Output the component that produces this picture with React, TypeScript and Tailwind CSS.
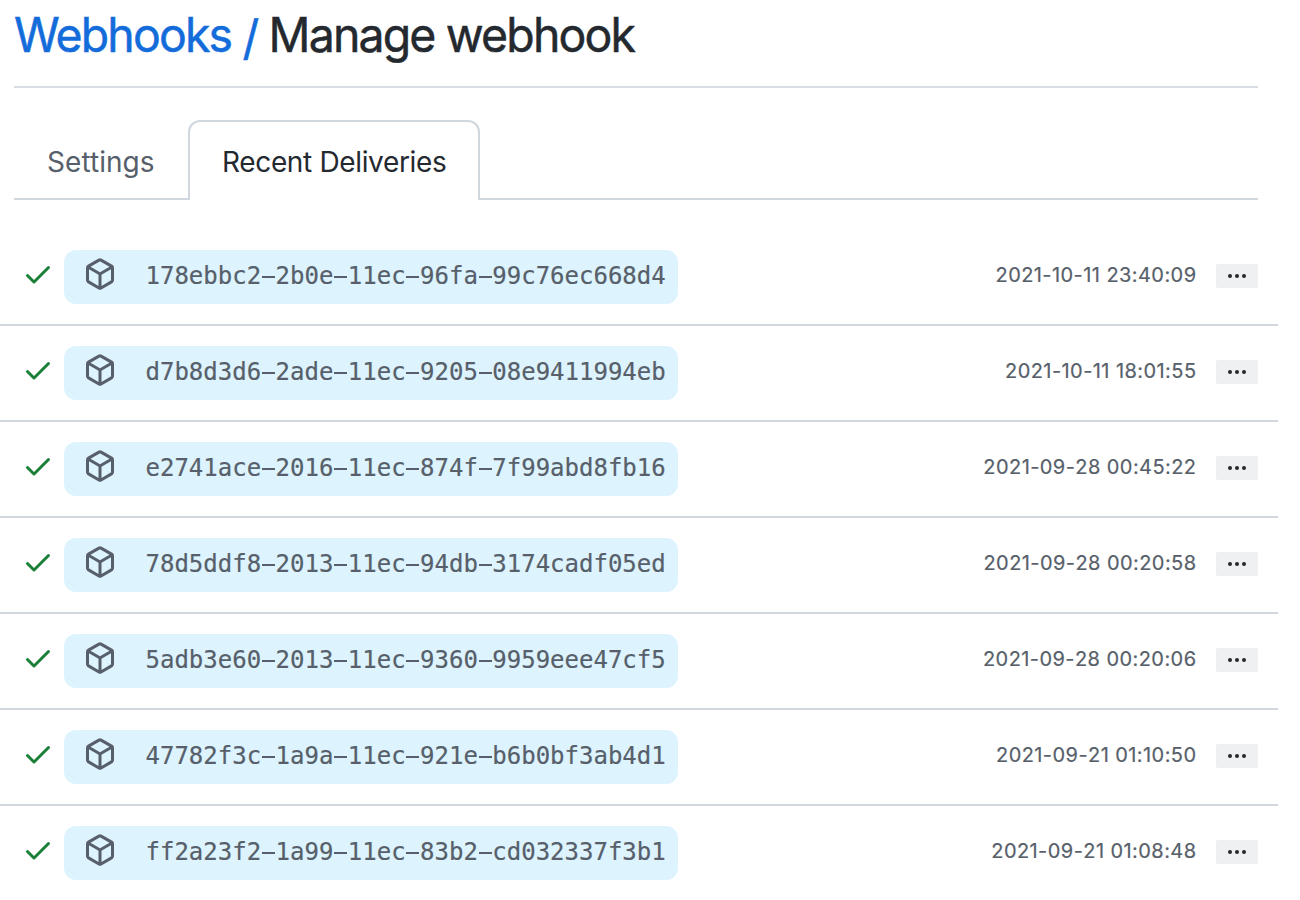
import React from 'react';

const deliveries = [
  { id: '178ebbc2-2b0e-11ec-96fa-99c76ec668d4', time: '2021-10-11 23:40:09' },
  { id: 'd7b8d3d6-2ade-11ec-9205-08e9411994eb', time: '2021-10-11 18:01:55' },
  { id: 'e2741ace-2016-11ec-874f-7f99abd8fb16', time: '2021-09-28 00:45:22' },
  { id: '78d5ddf8-2013-11ec-94db-3174cadf05ed', time: '2021-09-28 00:20:58' },
  { id: '5adb3e60-2013-11ec-9360-9959eee47cf5', time: '2021-09-28 00:20:06' },
  { id: '47782f3c-1a9a-11ec-921e-b6b0bf3ab4d1', time: '2021-09-21 01:10:50' },
  { id: 'ff2a23f2-1a99-11ec-83b2-cd032337f3b1', time: '2021-09-21 01:08:48' },
];

function CheckIcon() {
  return (
    <svg viewBox="0 0 16 16" className="h-8 w-8 shrink-0 fill-[#1a7f37]">
      <path d="M13.78 4.22a.75.75 0 010 1.06l-7.25 7.25a.75.75 0 01-1.06 0L2.22 9.28a.75.75 0 011.06-1.06L6 10.94l6.72-6.72a.75.75 0 011.06 0z" />
    </svg>
  );
}

function PackageIcon() {
  return (
    <svg viewBox="0 0 16 16" className="h-8 w-8 shrink-0 fill-[#57606a]">
      <path
        fillRule="evenodd"
        d="M8.878.392a1.75 1.75 0 00-1.756 0l-5.25 3.045A1.75 1.75 0 001 4.951v6.098c0 .624.332 1.2.872 1.514l5.25 3.045a1.75 1.75 0 001.756 0l5.25-3.045c.54-.313.872-.89.872-1.514V4.951c0-.624-.332-1.2-.872-1.514L8.878.392zM7.875 1.69a.25.25 0 01.25 0l4.63 2.685L8 7.133 3.245 4.375l4.63-2.685zM2.5 5.677v5.372c0 .09.047.171.125.216l4.625 2.683V8.432L2.5 5.677zm6.25 8.271l4.625-2.683a.25.25 0 00.125-.216V5.677L8.75 8.432v5.516z"
      />
    </svg>
  );
}

function DeliveryId({ id }: { id: string }) {
  return (
    <code className="font-['DejaVu_Sans_Mono',monospace] text-[24px] leading-8 [-webkit-text-stroke:0.2px_#57606a]">
      {id.split('-').map((part, index) => (
        <React.Fragment key={index}>
          {index > 0 && (
            <span className="bg-[linear-gradient(#57606a,#57606a)] bg-[length:13px_2px] bg-[position:50%_14px] bg-no-repeat [-webkit-text-stroke:0]">
              -
            </span>
          )}
          {part}
        </React.Fragment>
      ))}
    </code>
  );
}

export default function App() {
  return (
    <main className="h-[900px] w-[1300px] overflow-hidden bg-white font-['Inter','Liberation_Sans',sans-serif] text-[#24292f]">
      <header className="ml-[14px] h-[88px] w-[1244px] border-b-2 border-[#d8dee4] pt-[5px]">
        <h1 className="origin-left scale-x-[0.967] text-[48px] leading-[60px] font-normal tracking-[-1.9px] whitespace-nowrap [-webkit-text-stroke:0.5px_currentColor]">
          <a className="text-[#146cdb]">
            Webhooks <span className="relative top-[3px]">/</span>
          </a>{' '}
          Manage webhook
        </h1>
      </header>

      <nav className="mt-8 ml-[14px] flex h-20 w-[1244px] text-[28px] leading-[42px] whitespace-nowrap">
        <div className="w-[174px] border-b-2 border-[#d0d7de] pt-[21px] pl-[33px] text-[#57606a]">
          <span className="tracking-[0.05px]">Settings</span>
        </div>
        <div className="w-[292px] rounded-t-xl border-2 border-b-0 border-[#d0d7de] pt-[19px] pl-8">
          <span className="tracking-[-0.35px]">Recent Deliveries</span>
        </div>
        <div className="flex-1 border-b-2 border-[#d0d7de]" />
      </nav>

      <ul className="mt-[30px] w-[1278px]">
        {deliveries.map((delivery) => (
          <li
            key={delivery.id}
            className="flex h-24 items-start border-b-2 border-[#d0d7de] pt-5 pr-5 pl-[22px] last:border-b-0"
          >
            <div className="mt-2">
              <CheckIcon />
            </div>
            <div className="ml-[10px] flex h-[54px] w-[614px] items-start rounded-xl bg-[#ddf4ff] pt-2 pl-5 text-[#57606a]">
              <PackageIcon />
              <span className="ml-[29.5px] flex pt-[2px]">
                <DeliveryId id={delivery.id} />
              </span>
            </div>
            <time className="mt-[10px] ml-auto text-[20px] leading-[30px] tracking-[0.43px] text-[#57606a] [-webkit-text-stroke:0.2px_#57606a] [font-kerning:none]">
              {delivery.time}
            </time>
            <button className="mt-[14px] ml-[19.5px] flex h-6 w-[42px] items-center justify-center gap-[2.5px] rounded-[2px] bg-[#eff0f2]">
              <span className="size-[4.5px] rounded-full bg-[#24292f]" />
              <span className="size-[4.5px] rounded-full bg-[#24292f]" />
              <span className="size-[4.5px] rounded-full bg-[#24292f]" />
            </button>
          </li>
        ))}
      </ul>
    </main>
  );
}
